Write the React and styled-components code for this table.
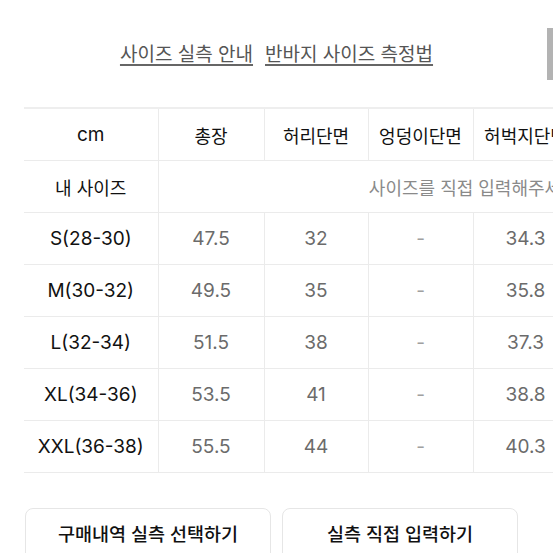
import React from "react";
import styled, { createGlobalStyle } from "styled-components";

const GlobalStyle = createGlobalStyle`
  html, body {
    margin: 0;
    padding: 0;
    background: #fff;
  }
  body {
    font-family: Inter, "Noto Sans CJK KR", sans-serif;
    overflow: hidden;
  }
`;

const Page = styled.div`
  position: relative;
  width: 553px;
  height: 553px;
  overflow: hidden;
`;

const ScrollThumb = styled.div`
  position: absolute;
  top: 28px;
  right: 0;
  width: 6px;
  height: 52px;
  background: #b3b3b3;
`;

const Guide = styled.div`
  display: flex;
  justify-content: center;
  gap: 12px;
  padding-top: 43px;
  height: 64px;
  box-sizing: border-box;
`;

const GuideLink = styled.a`
  font-size: 19px;
  line-height: 24px;
  color: #555;
  text-decoration: underline;
  text-decoration-color: #666;
  text-underline-offset: 3px;
  text-decoration-thickness: 1.5px;
  cursor: pointer;
`;

const TableWrap = styled.div`
  margin-top: 43px;
  margin-left: 24px;
  overflow: hidden;
`;

const Table = styled.table`
  border-collapse: collapse;
  table-layout: fixed;
  width: ${(p) => p.$width}px;
  border-top: 2px solid #eeeeee;
`;

const Cell = styled.td`
  height: 51px;
  padding: 0;
  text-align: center;
  vertical-align: middle;
  border-bottom: 1px solid #ebebeb;
  border-left: ${(p) => (p.$first ? "none" : "1px solid #ebebeb")};
  font-size: ${(p) => (p.$head ? "18px" : "19px")};
  color: ${(p) => p.$color || "#111"};
  white-space: nowrap;
  overflow: hidden;
`;

const Buttons = styled.div`
  display: grid;
  grid-template-columns: 246px 236px;
  gap: 11px;
  margin-top: 35px;
  margin-left: 25px;
`;

const Button = styled.button`
  height: 56px;
  border: 1px solid #e6e6e6;
  border-radius: 8px;
  background: #fff;
  font-family: Inter, "Noto Sans CJK KR", sans-serif;
  font-size: 18.5px;
  font-weight: 500;
  color: #111;
  padding: 0 0 6px;
  cursor: pointer;
`;

const widths = [134, 106, 104, 105, 105, 105, 105];
const headers = ["총장", "허리단면", "엉덩이단면", "허벅지단면", "밑위", "밑단단면"];
const rows = [
  { size: "S(28-30)", values: ["47.5", "32", "-", "34.3", "27", "27"] },
  { size: "M(30-32)", values: ["49.5", "35", "-", "35.8", "28", "28"] },
  { size: "L(32-34)", values: ["51.5", "38", "-", "37.3", "29", "29"] },
  { size: "XL(34-36)", values: ["53.5", "41", "-", "38.8", "30", "30"] },
  { size: "XXL(36-38)", values: ["55.5", "44", "-", "40.3", "31", "31"] },
];

export default function App() {
  const total = widths.reduce((a, b) => a + b, 0);
  return (
    <Page>
      <GlobalStyle />
      <ScrollThumb />
      <Guide>
        <GuideLink>사이즈 실측 안내</GuideLink>
        <GuideLink>반바지 사이즈 측정법</GuideLink>
      </Guide>

      <TableWrap>
        <Table $width={total}>
          <colgroup>
            {widths.map((w, i) => (
              <col key={i} style={{ width: w }} />
            ))}
          </colgroup>
          <tbody>
            <tr>
              <Cell $first>cm</Cell>
              {headers.map((h) => (
                <Cell key={h} $head>
                  {h}
                </Cell>
              ))}
            </tr>
            <tr>
              <Cell $first $head>
                내 사이즈
              </Cell>
              <Cell colSpan={6} $head $color="#8a8a8a">
                사이즈를 직접 입력해주세요
              </Cell>
            </tr>
            {rows.map((r) => (
              <tr key={r.size}>
                <Cell $first>{r.size}</Cell>
                {r.values.map((v, i) => (
                  <Cell key={i} $color={v === "-" ? "#a0a0a0" : "#6b6b6b"}>
                    {v}
                  </Cell>
                ))}
              </tr>
            ))}
          </tbody>
        </Table>
      </TableWrap>

      <Buttons>
        <Button>구매내역 실측 선택하기</Button>
        <Button>실측 직접 입력하기</Button>
      </Buttons>
    </Page>
  );
}
